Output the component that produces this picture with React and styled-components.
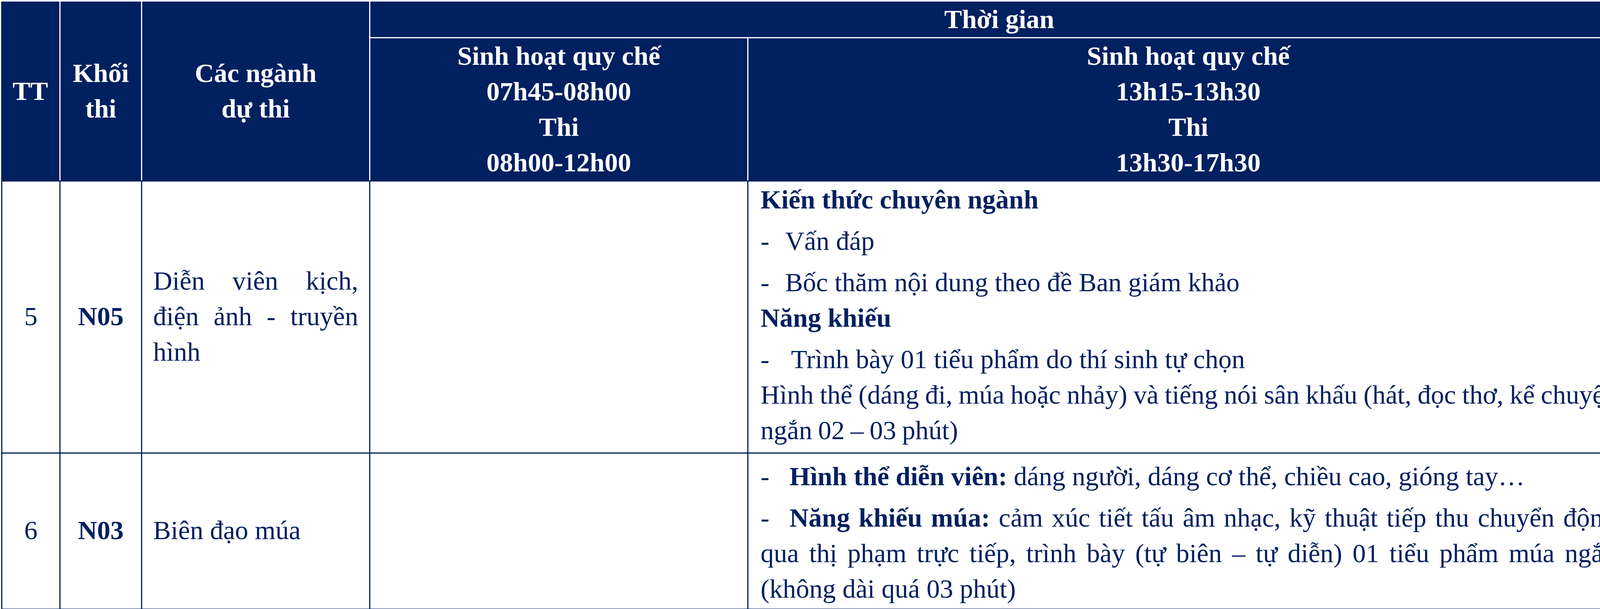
import React from "react";
import styled, { createGlobalStyle } from "styled-components";

const NAVY = "#002060";

const GlobalStyle = createGlobalStyle`
  html, body { margin: 0; padding: 0; background: #ffffff; }
  body { font-family: "Liberation Serif", "Times New Roman", serif; }
  *, *::before, *::after { box-sizing: border-box; }
`;

const Grid = styled.div`
  display: grid;
  grid-template-columns: 152px 209px 584px 968px 2252px;
  width: 4165px;
  margin: 4px 0 0 3px;
  font-family: "Liberation Serif", "Times New Roman", serif;
  font-size: 68px;
  line-height: 91px;
`;

const HeadCell = styled.div`
  grid-row: ${(p) => (p.$rows ? `span ${p.$rows}` : "auto")};
  grid-column: ${(p) => (p.$cols ? `span ${p.$cols}` : "auto")};
  display: flex;
  flex-direction: column;
  justify-content: center;
  align-items: center;
  background: ${NAVY};
  color: #ffffff;
  font-weight: 700;
  text-align: center;
  padding: 0 8px;
  border-right: ${(p) => (p.$end ? "none" : "3px solid #ffffff")};
  border-bottom: ${(p) => (p.$under ? "3px solid #ffffff" : "none")};
`;

const BodyCell = styled.div`
  display: flex;
  flex-direction: column;
  justify-content: ${(p) => (p.$top ? "flex-start" : "center")};
  align-items: stretch;
  color: ${NAVY};
  text-align: ${(p) => p.$align || "left"};
  font-weight: ${(p) => (p.$bold ? 700 : 400)};
  padding: ${(p) => p.$pad || "1px 28px 5px"};
  border-right: 3px solid ${NAVY};
  border-bottom: 3px solid ${NAVY};
  border-top: ${(p) => (p.$first ? `3px solid ${NAVY}` : "none")};
  border-left: ${(p) => (p.$lead ? `3px solid ${NAVY}` : "none")};
`;

const Para = styled.p`
  margin: ${(p) => (p.$gap ? `${p.$gap}px 0 0` : "0")};
  text-align: justify;
  word-spacing: ${(p) => (p.$tight ? "-2px" : "normal")};
`;

const Dash = styled.span`
  display: inline-block;
  width: ${(p) => p.$w || 74}px;
`;

const Strong = styled.b`
  font-weight: 700;
`;

export default function App() {
  return (
    <>
      <GlobalStyle />
      <Grid>
        <HeadCell $rows={2}>TT</HeadCell>
        <HeadCell $rows={2}>
          <span>Khối</span>
          <span>thi</span>
        </HeadCell>
        <HeadCell $rows={2}>
          <span>Các ngành</span>
          <span>dự thi</span>
        </HeadCell>
        <HeadCell $cols={2} $under $end>
          Thời gian
        </HeadCell>
        <HeadCell>
          <span>Sinh hoạt quy chế</span>
          <span>07h45-08h00</span>
          <span>Thi</span>
          <span>08h00-12h00</span>
        </HeadCell>
        <HeadCell $end>
          <span>Sinh hoạt quy chế</span>
          <span>13h15-13h30</span>
          <span>Thi</span>
          <span>13h30-17h30</span>
        </HeadCell>

        <BodyCell $first $lead $align="center" $pad="1px 4px 5px">
          5
        </BodyCell>
        <BodyCell $first $align="center" $bold $pad="1px 4px 5px">
          N05
        </BodyCell>
        <BodyCell $first>
          <Para>Diễn viên kịch, điện ảnh - truyền hình</Para>
        </BodyCell>
        <BodyCell $first $top />
        <BodyCell $first $top $pad="1px 24px 11px 31px">
          <Para>
            <Strong>Kiến thức chuyên ngành</Strong>
          </Para>
          <Para $gap={15}>
            <Dash $w={63}>-</Dash>Vấn đáp
          </Para>
          <Para $gap={15}>
            <Dash $w={63}>-</Dash>Bốc thăm nội dung theo đề Ban giám khảo
          </Para>
          <Para>
            <Strong>Năng khiếu</Strong>
          </Para>
          <Para $gap={15}>
            <Dash $w={78}>-</Dash>Trình bày 01 tiểu phẩm do thí sinh tự chọn
          </Para>
          <Para $tight>
            Hình thể (dáng đi, múa hoặc nhảy) và tiếng nói sân khấu (hát, đọc thơ, kể
            chuyện ngắn 02 – 03 phút)
          </Para>
        </BodyCell>

        <BodyCell $lead $align="center" $pad="1px 4px 5px">
          6
        </BodyCell>
        <BodyCell $align="center" $bold $pad="1px 4px 5px">
          N03
        </BodyCell>
        <BodyCell>
          <Para>Biên đạo múa</Para>
        </BodyCell>
        <BodyCell $top />
        <BodyCell $top $pad="1px 27px 5px 31px">
          <Para $gap={12}>
            <Dash $w={74}>-</Dash>
            <Strong>Hình thể diễn viên:</Strong> dáng người, dáng cơ thể, chiều cao, gióng
            tay…
          </Para>
          <Para $gap={15}>
            <Dash $w={74}>-</Dash>
            <Strong>Năng khiếu múa:</Strong> cảm xúc tiết tấu âm nhạc, kỹ thuật tiếp thu
            chuyển động qua thị phạm trực tiếp, trình bày (tự biên – tự diễn) 01 tiểu phẩm
            múa ngắn (không dài quá 03 phút)
          </Para>
        </BodyCell>
      </Grid>
    </>
  );
}
